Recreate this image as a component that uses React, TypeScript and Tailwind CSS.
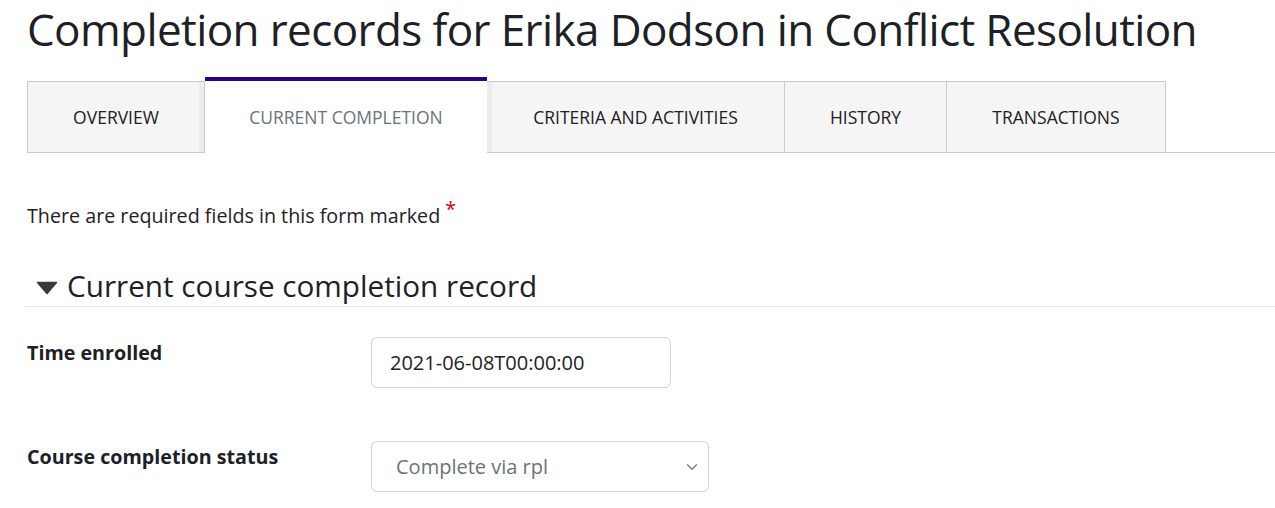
import { ChevronDown } from "lucide-react";

const tabs = [
  { label: "OVERVIEW", width: "w-[178px]" },
  { label: "CURRENT COMPLETION", width: "w-[282px]", active: true },
  { label: "CRITERIA AND ACTIVITIES", width: "w-[298px]" },
  { label: "HISTORY", width: "w-[162px]" },
  { label: "TRANSACTIONS", width: "w-[219px]" },
];

export default function App() {
  return (
    <div className="min-h-[508px] bg-white pl-[27px] pt-[2px] text-[#1d2125] font-['Open_Sans',sans-serif]">
      <h1 className="text-[44px] leading-[54px] tracking-[-0.6px] font-normal text-[#1d2125] whitespace-nowrap">
        Completion records for Erika Dodson in Conflict Resolution
      </h1>

      {/* Tabs */}
      <div className="mt-[21px] flex items-end border-b border-[#cccccc]">
        {tabs.map((t, i) =>
          t.active ? (
            <div
              key={t.label}
              className={`${t.width} h-[76px] -mb-px flex items-center justify-center border-t-4 border-[#2e0085] bg-white pt-[1px] text-[17.5px] text-[#6a737b]`}
            >
              {t.label}
            </div>
          ) : (
            <div
              key={t.label}
              className={`${t.width} h-[72px] -mb-px flex items-center justify-center border border-[#cccccc] ${
                i > 0 ? "border-l-0" : ""
              } bg-[#f5f5f5] text-[17.5px] text-[#1d2125] ${
                i === 0 ? "shadow-[inset_-5px_0_0_#ececec]" : ""
              } ${i === 2 ? "border-l shadow-[inset_5px_0_0_#ececec]" : ""}`}
            >
              {t.label}
            </div>
          )
        )}
      </div>

      <p className="mt-[50px] text-[19.7px] leading-[26px]">
        There are required fields in this form marked{" "}
        <span className="relative -top-[7px] text-[#d0021b]">*</span>
      </p>

      {/* Section header */}
      <div className="mt-[38px] flex items-center gap-[9px] border-b border-[#e6e6e6] pb-[1px] -ml-[2px]">
        <svg width="22" height="14" viewBox="0 0 22 14" className="ml-[11px] mt-[3px]">
          <path d="M1.5 1.5 L20.5 1.5 L11 12.5 Z" fill="#343a40" stroke="#343a40" strokeWidth="1.5" strokeLinejoin="round" />
        </svg>
        <h2 className="text-[29.7px] leading-[38px] font-normal">Current course completion record</h2>
      </div>

      {/* Form rows */}
      <div className="mt-[30px] flex flex-col gap-[53px]">
        <div className="flex items-start">
          <label className="w-[344px] pt-[3px] text-[19.7px] font-bold leading-[26px]">Time enrolled</label>
          <input
            type="text"
            readOnly
            value="2021-06-08T00:00:00"
            className="w-[300px] h-[51px] rounded-[6px] border border-[#ced4da] bg-white px-[18px] text-[20px] text-[#1d2125] outline-none"
          />
        </div>
        <div className="flex items-start">
          <label className="w-[344px] pt-[3px] text-[19.7px] font-bold leading-[26px]">Course completion status</label>
          <div className="relative w-[338px] h-[51px] rounded-[6px] border border-[#ced4da] bg-white flex items-center px-[24px] text-[20px] text-[#6a737b]">
            Complete via rpl
            <ChevronDown className="absolute right-[7px] top-[16px] w-[18px] h-[18px] text-[#6a737b]" strokeWidth={1.5} />
          </div>
        </div>
      </div>
    </div>
  );
}
